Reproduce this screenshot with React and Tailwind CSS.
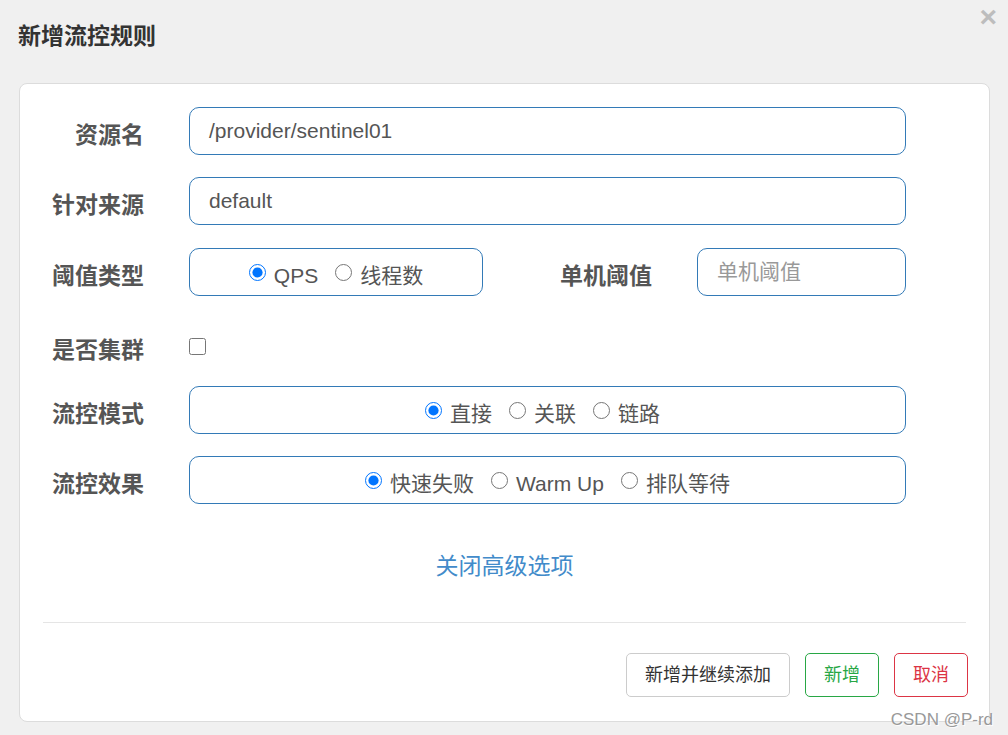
import React from "react";

const font = { fontFamily: '"Liberation Sans", "Noto Sans CJK SC", sans-serif' };

const Label = ({ children, w = "w-[124px]" }) => (
  <div className={`${w} shrink-0 text-right text-[23px] font-bold leading-none text-[#555] pt-[8px]`}>
    {children}
  </div>
);

const Radio = ({ name, label, checked }) => (
  <label className="flex items-center">
    <input
      type="radio"
      name={name}
      defaultChecked={checked}
      className="m-0 h-[17px] w-[17px] accent-[#0075ff]"
    />
    <span className="ml-[8px] text-[21px] leading-none text-[#555] pt-[6px]">{label}</span>
  </label>
);

const RadioBox = ({ name, items, className }) => (
  <div
    className={`flex h-full items-center justify-center gap-[17px] rounded-[10px] border border-[#337ab7] ${className}`}
  >
    {items.map((item, index) => (
      <Radio key={index + item} name={name} label={item} checked={index === 0} />
    ))}
  </div>
);

export default function App() {
  return (
    <div className="relative h-[735px] w-[1008px] overflow-hidden bg-[#f0f0f0]" style={font}>
      <div className="absolute right-[11px] top-[2px] text-[30px] font-bold leading-none text-[#bdbdbd]">
        ×
      </div>

      <div className="pl-[18px] pt-[23px] text-[23px] font-bold leading-[26px] text-[#333]">新增流控规则</div>

      <div className="ml-[19px] mt-[34px] w-[971px] rounded-[8px] border border-[#dcdcdc] bg-white pb-[24px] pt-[23px]">
        {/* 资源名 */}
        <div className="flex h-[48px] items-center">
          <Label>资源名</Label>
          <div className="ml-[45px] flex h-full w-[717px] items-center rounded-[10px] border border-[#337ab7] px-[19px] text-[21px] text-[#555]">
            /provider/sentinel01
          </div>
        </div>

        {/* 针对来源 */}
        <div className="mt-[22px] flex h-[48px] items-center">
          <Label>针对来源</Label>
          <div className="ml-[45px] flex h-full w-[717px] items-center rounded-[10px] border border-[#337ab7] px-[19px] text-[21px] text-[#555]">
            default
          </div>
        </div>

        {/* 阈值类型 */}
        <div className="mt-[23px] flex h-[48px] items-center">
          <Label>阈值类型</Label>
          <RadioBox name="grade" items={["QPS", "线程数"]} className="ml-[45px] w-[294px]" />
          <Label w="w-[169px]">单机阈值</Label>
          <div className="ml-[45px] flex h-full w-[209px] items-center rounded-[10px] border border-[#337ab7] px-[19px] text-[21px] text-[#999]">
            单机阈值
          </div>
        </div>

        {/* 是否集群 */}
        <div className="mt-[26px] flex h-[48px] items-center">
          <Label>是否集群</Label>
          <input type="checkbox" className="ml-[45px] mt-[1px] h-[17px] w-[17px] accent-[#0075ff]" />
        </div>

        {/* 流控模式 */}
        <div className="mt-[16px] flex h-[48px] items-center">
          <Label>流控模式</Label>
          <RadioBox name="strategy" items={["直接", "关联", "链路"]} className="ml-[45px] w-[717px] pr-[10px]" />
        </div>

        {/* 流控效果 */}
        <div className="mt-[22px] flex h-[48px] items-center">
          <Label>流控效果</Label>
          <RadioBox name="behavior" items={["快速失败", "Warm Up", "排队等待"]} className="ml-[45px] w-[717px]" />
        </div>

        <div className="mt-[46px] text-center text-[23px] leading-[32px] text-[#428bca]">关闭高级选项</div>

        <div className="mx-[23px] mt-[40px] h-px bg-[#e5e5e5]" />

        <div className="mr-[21px] mt-[30px] flex justify-end gap-[15px]">
          <button className="h-[44px] rounded-[5px] border border-[#ccc] bg-white px-[18px] text-[18px] text-[#333]">
            新增并继续添加
          </button>
          <button className="h-[44px] rounded-[5px] border border-[#28a745] bg-white px-[18px] text-[18px] text-[#28a745]">
            新增
          </button>
          <button className="h-[44px] rounded-[5px] border border-[#dc3545] bg-white px-[18px] text-[18px] text-[#dc3545]">
            取消
          </button>
        </div>
      </div>

      <div
        className="absolute bottom-[7px] right-[15px] text-[17px] leading-none text-[#999]"
        style={{ textShadow: "1px 1px 1px #fff" }}
      >
        CSDN @P-rd
      </div>
    </div>
  );
}
